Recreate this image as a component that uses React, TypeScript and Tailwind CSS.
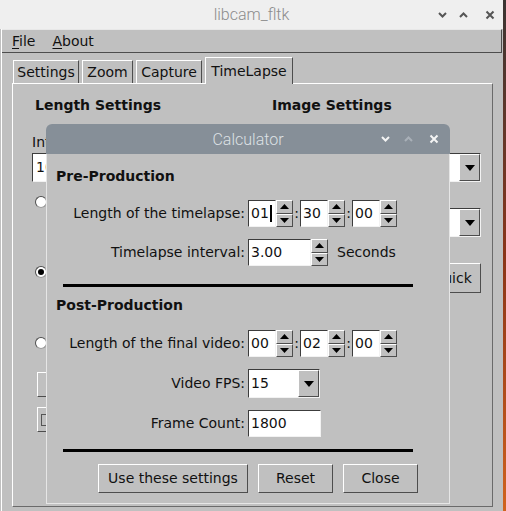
import React from 'react';

const raised = 'border border-t-white border-l-white border-r-[#4d4d4d] border-b-[#4d4d4d] bg-[#c0c0c0]';
const sunken = 'border border-t-[#3c3c3c] border-l-[#3c3c3c] border-r-[#f2f2f2] border-b-[#f2f2f2] bg-white';

function Tri({ up, w = 9, h = 5 }: { up?: boolean; w?: number; h?: number }) {
  return (
    <svg width={w} height={h} viewBox={`0 0 ${w} ${h}`}>
      <path d={up ? `M${w / 2} 0L${w} ${h}H0z` : `M0 0H${w}L${w / 2} ${h}z`} fill="#000" />
    </svg>
  );
}

function Chevron({ up, color, size = 9 }: { up?: boolean; color: string; size?: number }) {
  return (
    <svg width={size} height="6" viewBox="0 0 9 6">
      <path d={up ? 'M1 5L4.5 1.5L8 5' : 'M1 1L4.5 4.5L8 1'} stroke={color} strokeWidth="2" fill="none" />
    </svg>
  );
}

function Cross({ color }: { color: string }) {
  return (
    <svg width="10" height="10" viewBox="0 0 10 10">
      <path d="M1.5 1.5L8.5 8.5M8.5 1.5L1.5 8.5" stroke={color} strokeWidth="2" />
    </svg>
  );
}

function Spinner() {
  return (
    <div className="flex flex-col w-[17px] h-[27px]">
      <div className={`${raised} flex-1 flex items-center justify-center`}>
        <Tri up />
      </div>
      <div className={`${raised} flex-1 flex items-center justify-center`}>
        <Tri />
      </div>
    </div>
  );
}

function TimeGroup({ v, cursor }: { v: string; cursor?: boolean }) {
  return (
    <div className="flex">
      <div className={`${sunken} w-[28px] h-[27px] flex items-center pl-[2px]`}>
        <span>{v}</span>
        {cursor && <span className="w-[2px] h-[17px] bg-black ml-[1px]" />}
      </div>
      <Spinner />
    </div>
  );
}

function Colon() {
  return <div className="w-[7px] text-center">:</div>;
}

function Row({ label, children, className }: { label: string; children: React.ReactNode; className: string }) {
  return (
    <div className={`flex items-center h-[27px] ${className}`}>
      <div className="w-[198px] text-right">{label}</div>
      <div className="ml-[3px] flex items-center">{children}</div>
    </div>
  );
}

function Choice({ value, className }: { value: string; className: string }) {
  return (
    <div className={`${sunken} flex h-[29px] ${className}`}>
      <div className="flex-1 flex items-center pl-[2px]">{value}</div>
      <div className={`${raised} w-[21px] flex items-center justify-center`}>
        <Tri w={10} h={6} />
      </div>
    </div>
  );
}

function Radio({ on, className }: { on?: boolean; className: string }) {
  return (
    <div
      className={`w-[12px] h-[12px] rounded-full bg-white border border-t-[#4d4d4d] border-l-[#4d4d4d] border-r-[#9a9a9a] border-b-[#9a9a9a] flex items-center justify-center ${className}`}
    >
      {on && <div className="w-[6px] h-[6px] rounded-full bg-black" />}
    </div>
  );
}

function Tab({ label, active, w }: { label: string; active?: boolean; w: string }) {
  return (
    <div
      className={`${w} flex items-center justify-center border-t border-l border-r border-t-white border-l-white border-r-[#4d4d4d] bg-[#c0c0c0] ${
        active ? 'h-[27px] relative z-10 -mb-[1px]' : 'h-[23px]'
      }`}
    >
      {label}
    </div>
  );
}

function MainWindow() {
  return (
    <div className="w-[503px] h-full bg-[#c0c0c0] flex flex-col">
      <div className="h-[29px] bg-[#efefef] relative flex items-center justify-center">
        <span className="font-['Roboto',sans-serif] font-light text-[16px] text-[#8c8c8c]">libcam_fltk</span>
        <div className="absolute right-[8px] top-0 h-full flex items-center gap-[12px]">
          <Chevron color="#555" />
          <Chevron up color="#555" />
          <div className="ml-[5px]">
            <Cross color="#555" />
          </div>
        </div>
      </div>

      <div className="flex-1 flex flex-col border-l border-l-white ml-[1px]">
        <div className="h-[24px] flex items-center gap-[17px] pl-[10px] border-t border-t-[#e8e8e8] border-b border-b-[#4d4d4d] border-r border-r-[#4d4d4d] mr-[1px]">
          <span>
            <span className="underline underline-offset-2">F</span>ile
          </span>
          <span>
            <span className="underline underline-offset-2">A</span>bout
          </span>
        </div>

        <div className="flex items-end gap-[3px] pl-[11px] mt-[4px]">
          <Tab label="Settings" w="w-[66px]" />
          <Tab label="Zoom" w="w-[51px]" />
          <Tab label="Capture" w="w-[66px]" />
          <Tab label="TimeLapse" w="w-[88px]" active />
        </div>

        <div className="ml-[10px] mr-[10px] h-[424px] border border-t-white border-l-white border-r-[#6a6a6a] border-b-[#6a6a6a] flex">
          <div className="w-[259px] flex flex-col pl-[19px]">
            <div className="mt-[12px] ml-[3px] h-[18px] leading-[18px] font-bold">Length Settings</div>
            <div className="mt-[20px] h-[17px] leading-[17px]">Interval</div>
            <div className={`${sunken} mt-[2px] h-[29px] w-[140px] flex items-center pl-[3px]`}>10</div>
            <Radio className="mt-[14px] ml-[3px]" />
            <Radio on className="mt-[58px] ml-[3px]" />
            <Radio className="mt-[59px] ml-[3px]" />
            <div className={`${raised} mt-[23px] ml-[5px] w-[120px] h-[25px]`} />
            <div className={`${raised} mt-[10px] ml-[5px] w-[120px] h-[25px] flex items-center pl-[3px]`}>
              <div className="w-[12px] h-[12px] border border-[#555] bg-[#c0c0c0]" />
            </div>
          </div>
          <div className="flex-1 flex flex-col items-end pr-[11px]">
            <div className="self-start mt-[12px] h-[18px] leading-[18px] font-bold">Image Settings</div>
            <Choice value="" className="mt-[39px] w-[130px]" />
            <Choice value="" className="mt-[26px] w-[130px]" />
            <div className={`${raised} mt-[26px] w-[58px] h-[30px] flex items-center justify-center`}>Quick</div>
          </div>
        </div>
      </div>
    </div>
  );
}

function Calculator() {
  return (
    <div className="absolute left-[46px] top-[124px] w-[404px] flex flex-col">
      <div className="h-[30px] bg-[#868f98] rounded-t-[6px] relative flex items-center justify-center">
        <span className="font-['Roboto',sans-serif] font-light text-[16px] text-[#dde1e5]">Calculator</span>
        <div className="absolute right-[11px] top-0 h-full flex items-center gap-[14px]">
          <Chevron color="#f4f4f4" />
          <Chevron up color="#a9b0b8" />
          <div className="ml-[2px]">
            <Cross color="#f4f4f4" />
          </div>
        </div>
      </div>
      <div className="bg-[#c0c0c0] border-l border-r border-b border-[#e6e6e6] flex flex-col pb-[10px]">
        <div className="mt-[13px] ml-[9px] h-[18px] leading-[18px] font-bold">Pre-Production</div>
        <Row label="Length of the timelapse:" className="mt-[15px]">
          <TimeGroup v="01" cursor />
          <Colon />
          <TimeGroup v="30" />
          <Colon />
          <TimeGroup v="00" />
        </Row>
        <Row label="Timelapse interval:" className="mt-[12px]">
          <div className={`${sunken} w-[63px] h-[27px] flex items-center pl-[2px]`}>3.00</div>
          <Spinner />
          <span className="ml-[9px]">Seconds</span>
        </Row>
        <div className="mt-[18px] ml-[16px] w-[350px] h-[3px] bg-black" />
        <div className="mt-[9px] ml-[9px] h-[18px] leading-[18px] font-bold">Post-Production</div>
        <Row label="Length of the final video:" className="mt-[16px]">
          <TimeGroup v="00" />
          <Colon />
          <TimeGroup v="02" />
          <Colon />
          <TimeGroup v="00" />
        </Row>
        <Row label="Video FPS:" className="mt-[13px]">
          <Choice value="15" className="w-[72px] h-[27px]" />
        </Row>
        <Row label="Frame Count:" className="mt-[13px]">
          <div className={`${sunken} w-[73px] h-[27px] flex items-center pl-[2px]`}>1800</div>
        </Row>
        <div className="mt-[12px] ml-[16px] w-[350px] h-[3px] bg-black" />
        <div className="mt-[12px] ml-[51px] flex gap-[10px]">
          <div className={`${raised} w-[150px] h-[29px] flex items-center justify-center`}>Use these settings</div>
          <div className={`${raised} w-[75px] h-[29px] flex items-center justify-center`}>Reset</div>
          <div className={`${raised} w-[75px] h-[29px] flex items-center justify-center`}>Close</div>
        </div>
      </div>
    </div>
  );
}

export default function App() {
  return (
    <div className="w-[506px] h-[511px] relative overflow-hidden bg-gradient-to-b from-[#3a3432] via-[#8a3418] to-[#d0621e] font-['DejaVu_Sans',sans-serif] text-[14px] leading-[17px] text-[#111]">
      <MainWindow />
      <Calculator />
    </div>
  );
}
